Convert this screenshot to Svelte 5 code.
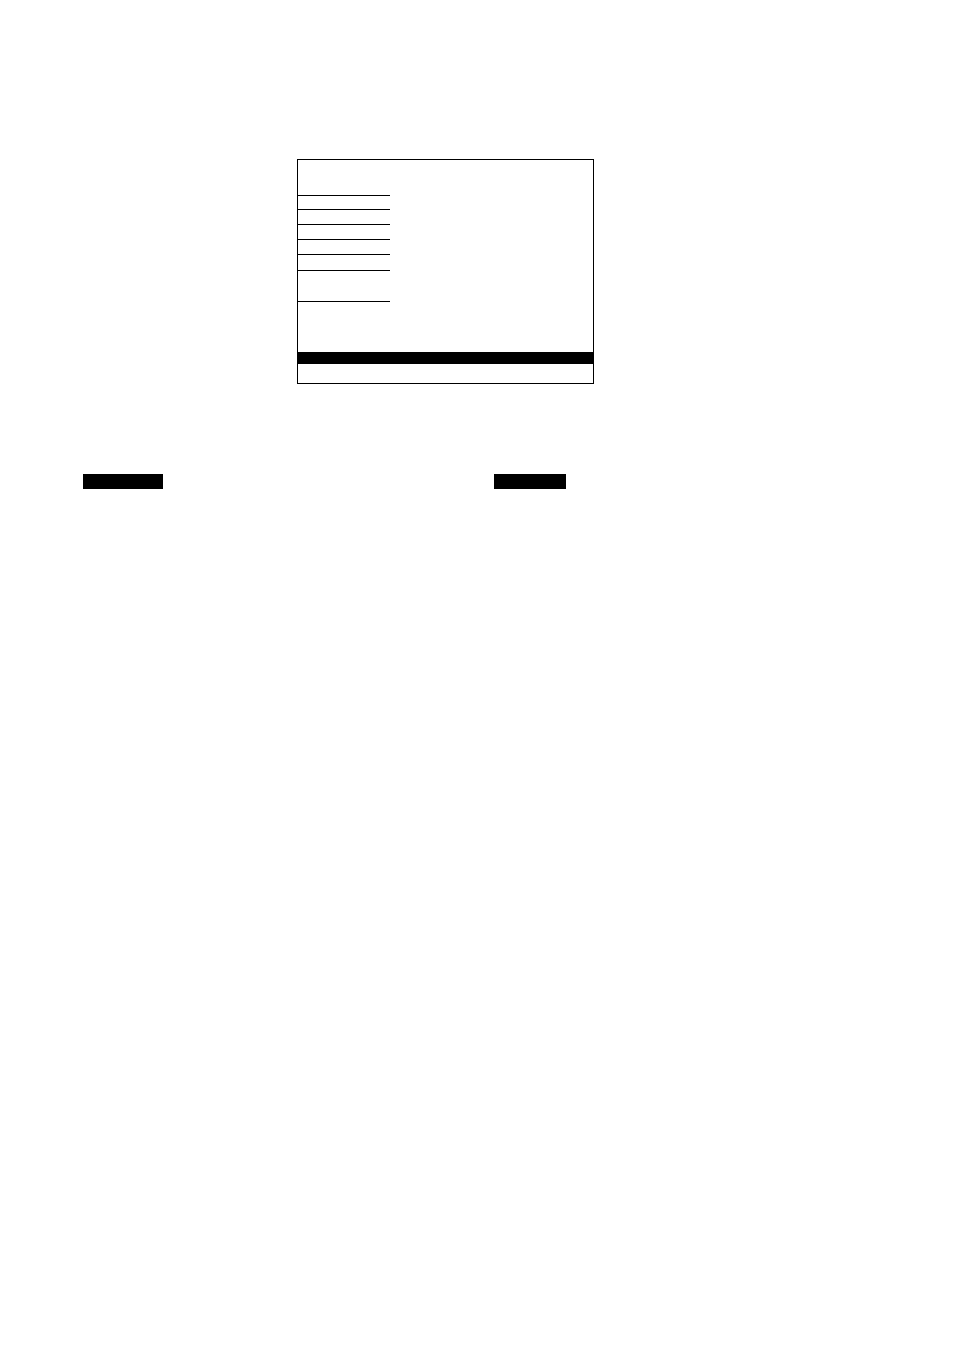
<script lang="ts">
  // heights of the rows in the left column, each closed by a rule
  const rows: number[] = [36, 14, 15, 15, 15, 16, 31];
</script>

<main class="page">
  <section class="screen">
    <ul class="menu">
      {#each rows as height}
        <li style="height: {height}px"></li>
      {/each}
    </ul>
    <div class="status-bar"></div>
    <div class="footer"></div>
  </section>

  <div class="columns">
    <section class="column">
      <div class="label wide"></div>
    </section>
    <section class="column">
      <div class="label"></div>
    </section>
  </div>
</main>

<style>
  :global(body) {
    margin: 0;
    background: #fff;
  }

  .page {
    box-sizing: border-box;
    min-height: 100vh;
    padding: 159px 49px 0 83px;
    font-family: "Liberation Sans", Arial, sans-serif;
  }

  .screen {
    box-sizing: border-box;
    display: flex;
    flex-direction: column;
    width: 36%;
    min-width: 297px;
    margin-left: 214px;
    border: 1px solid #000;
  }

  .menu {
    width: 92px;
    margin: 0 0 50px;
    padding: 0;
    list-style: none;
  }

  .menu li {
    box-sizing: border-box;
    border-bottom: 1px solid #000;
  }

  .status-bar {
    height: 12px;
    background: #000;
  }

  .footer {
    height: 19px;
  }

  .columns {
    display: grid;
    grid-template-columns: 1fr 1fr;
    margin-top: 90px;
  }

  .label {
    width: 72px;
    height: 15px;
    background: #000;
  }

  .label.wide {
    width: 80px;
  }
</style>
